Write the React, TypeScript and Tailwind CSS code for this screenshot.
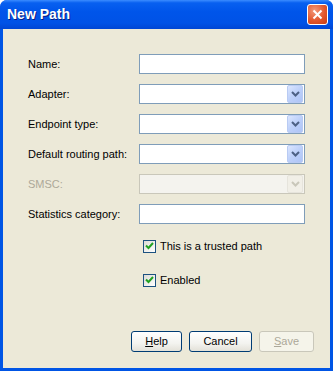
import React from "react";

function ComboArrow({ disabled }: { disabled?: boolean }) {
  return (
    <div
      className={
        disabled
          ? "w-[16px] h-[18px] rounded-[2px] border border-[#e6e4dc] bg-[#f1efe7] flex items-center justify-center"
          : "w-[16px] h-[18px] rounded-[2px] border border-[#b9cbf3] bg-[linear-gradient(135deg,#dbe6fe_0%,#bdd0fa_50%,#aec4f6_100%)] flex items-center justify-center"
      }
    >
      <svg width="9" height="6" viewBox="0 0 9 6">
        <path
          d="M1 1 L4.5 4.5 L8 1"
          fill="none"
          stroke={disabled ? "#c9c7ba" : "#4d6185"}
          strokeWidth={2}
        />
      </svg>
    </div>
  );
}

function TextField() {
  return <div className="h-[20px] w-[166px] border border-[#7f9db9] bg-white" />;
}

function ComboBox({ disabled }: { disabled?: boolean }) {
  return (
    <div
      className={
        disabled
          ? "h-[20px] w-[166px] border border-[#c9c7ba] bg-[#f4f3ee] flex items-center justify-end pr-[1px]"
          : "h-[20px] w-[166px] border border-[#7f9db9] bg-white flex items-center justify-end pr-[1px]"
      }
    >
      <ComboArrow disabled={disabled} />
    </div>
  );
}

function CheckBox({ label }: { label: string }) {
  return (
    <div className="flex items-center gap-[4px] h-[14px]">
      <div className="w-[13px] h-[13px] border border-[#1c5180] bg-[linear-gradient(135deg,#dcdbd5_0%,#ffffff_100%)] flex items-center justify-center">
        <svg width="9" height="8" viewBox="0 0 9 8">
          <path d="M1 3.5 L3.5 6 L8 1" fill="none" stroke="#21a121" strokeWidth={2} />
        </svg>
      </div>
      <span>{label}</span>
    </div>
  );
}

function XpButton({
  children,
  width,
  disabled,
}: {
  children: React.ReactNode;
  width: string;
  disabled?: boolean;
}) {
  return (
    <button
      className={
        (disabled
          ? "border-[#c9c7ba] bg-[#f5f4ea] text-[#aca899] "
          : "border-[#003c74] bg-[linear-gradient(180deg,#ffffff_0%,#f3f3ef_60%,#e3e1d8_100%)] text-black ") +
        width +
        " h-[21px] rounded-[3px] border flex items-center justify-center"
      }
    >
      {children}
    </button>
  );
}

const rows: { label: string; kind: "text" | "combo" | "disabled" }[] = [
  { label: "Name:", kind: "text" },
  { label: "Adapter:", kind: "combo" },
  { label: "Endpoint type:", kind: "combo" },
  { label: "Default routing path:", kind: "combo" },
  { label: "SMSC:", kind: "disabled" },
  { label: "Statistics category:", kind: "text" },
];

export default function App() {
  return (
    <div className="w-[333px] h-[371px] bg-white font-['Liberation_Sans',Arial,sans-serif] text-[11px] text-black">
      <div className="w-full h-full flex flex-col rounded-t-[7px] overflow-hidden bg-[#0055e5]">
        {/* Title bar */}
        <div className="h-[29px] flex items-center justify-between pl-[7px] pr-[5px] bg-[linear-gradient(180deg,#3b8cff_0%,#0860f0_10%,#0055ea_40%,#0052e6_80%,#0046d4_100%)]">
          <span className="text-white font-bold text-[14px] [text-shadow:1px_1px_0_#0a1e80]">
            New Path
          </span>
          <div className="w-[21px] h-[21px] rounded-[3px] border border-white bg-[radial-gradient(circle_at_35%_30%,#f39a7b_0%,#e2572e_55%,#c83c12_100%)] flex items-center justify-center">
            <svg width="11" height="11" viewBox="0 0 11 11">
              <path d="M1.5 1.5 L9.5 9.5 M9.5 1.5 L1.5 9.5" stroke="white" strokeWidth={2} />
            </svg>
          </div>
        </div>

        {/* Client area */}
        <div className="flex-1 ml-[3px] mr-[3px] mb-[3px] bg-[#ece9d8] flex flex-col">
          <div className="grid grid-cols-[111px_166px] gap-y-[10px] pl-[25px] pt-[25px]">
            {rows.map((r) => (
              <React.Fragment key={r.label}>
                <div className={"h-[20px] flex items-center " + (r.kind === "disabled" ? "text-[#aca899]" : "")}>
                  {r.label}
                </div>
                {r.kind === "text" && <TextField />}
                {r.kind === "combo" && <ComboBox />}
                {r.kind === "disabled" && <ComboBox disabled />}
              </React.Fragment>
            ))}
          </div>

          <div className="flex flex-col gap-[20px] pl-[140px] pt-[15px]">
            <CheckBox label="This is a trusted path" />
            <CheckBox label="Enabled" />
          </div>

          <div className="mt-auto flex justify-end gap-[7px] pr-[16px] pb-[16px]">
            <XpButton width="w-[51px]">
              <span>
                <u>H</u>elp
              </span>
            </XpButton>
            <XpButton width="w-[63px]">Cancel</XpButton>
            <XpButton width="w-[55px]" disabled>
              <span>
                <u>S</u>ave
              </span>
            </XpButton>
          </div>
        </div>
      </div>
    </div>
  );
}
